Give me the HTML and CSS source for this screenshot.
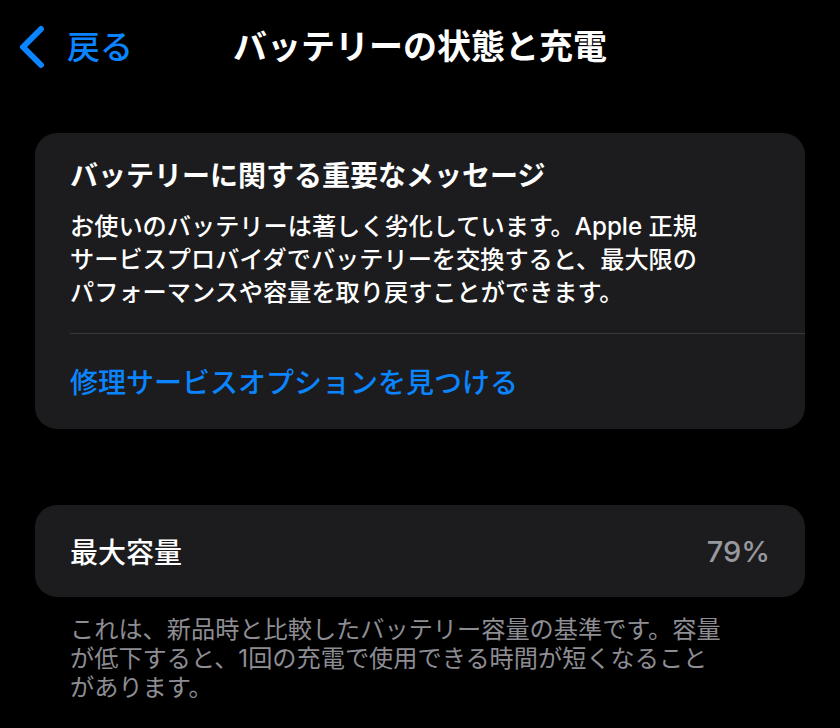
FILE: index.html
```html
<!DOCTYPE html>
<html lang="ja">
<head>
<meta charset="utf-8">
<title>バッテリーの状態と充電</title>
<link rel="stylesheet" href="styles.css">
</head>
<body>
<header class="nav">
  <a class="back" href="#">
    <svg class="chev" width="30" height="44" viewBox="0 0 30 44" aria-hidden="true">
      <polyline points="23,4 5,22 23,40" fill="none" stroke="#0a84ff" stroke-width="6" stroke-linecap="round" stroke-linejoin="round"/>
    </svg>
    <span class="back-label">戻る</span>
  </a>
  <h1 class="title">バッテリーの状態と充電</h1>
  <div class="spacer"></div>
</header>
<main class="content">
  <section class="card message">
    <h2 class="msg-title">バッテリーに関する重要なメッセージ</h2>
    <p class="msg-body">お使いのバッテリーは著しく劣化しています。Apple 正規<br>サービスプロバイダでバッテリーを交換すると、最大限の<br>パフォーマンスや容量を取り戻すことができます。</p>
    <div class="divider"></div>
    <a class="link" href="#">修理サービスオプションを見つける</a>
  </section>
  <section class="card row">
    <span class="row-label">最大容量</span>
    <span class="row-value">79%</span>
  </section>
  <p class="footnote">これは、新品時と比較したバッテリー容量の基準です。容量<br>が低下すると、1回の充電で使用できる時間が短くなること<br>があります。</p>
</main>
</body>
</html>
```
FILE: styles.css
```css
* { box-sizing: border-box; }
html, body {
  margin: 0;
  padding: 0;
  background: #000;
}
body {
  width: 840px;
  height: 728px;
  overflow: hidden;
  color: #fff;
  font-family: "Inter", "Noto Sans CJK JP", "Noto Sans", sans-serif;
  -webkit-font-smoothing: antialiased;
}
.nav {
  height: 94px;
  display: grid;
  grid-template-columns: 1fr auto 1fr;
  align-items: center;
}
.back {
  display: flex;
  align-items: center;
  gap: 19px;
  padding-left: 18px;
  text-decoration: none;
  color: #0a84ff;
}
.chev { display: block; }
.back-label {
  font-size: 33px;
  line-height: 40px;
  font-weight: 500;
}
.title {
  margin: 0;
  font-size: 34px;
  line-height: 40px;
  font-weight: 700;
  color: #fff;
}
.content {
  padding: 39px 35px 0;
}
.card {
  background: #1c1c1e;
  border-radius: 22px;
}
.message {
  padding: 26px 0 29px 35px;
  display: flex;
  flex-direction: column;
}
.msg-title {
  margin: 0;
  font-size: 28px;
  line-height: 34px;
  font-weight: 700;
}
.msg-body {
  margin: 17px 0 0;
  font-size: 24.2px;
  line-height: 33px;
  font-weight: 500;
}
.divider {
  margin-top: 24px;
  height: 1px;
  background: #38383a;
}
.link {
  margin-top: 32px;
  font-size: 28px;
  line-height: 34px;
  font-weight: 500;
  color: #0a84ff;
  text-decoration: none;
}
.row {
  margin-top: 76px;
  height: 92px;
  display: flex;
  align-items: center;
  justify-content: space-between;
  padding: 0 35px 0 35px;
}
.row-label {
  font-size: 28px;
  font-weight: 500;
}
.row-value {
  font-size: 29px;
  font-weight: 500;
  color: #98989f;
}
.footnote {
  margin: 18px 0 0;
  padding: 0 35px;
  font-size: 24.2px;
  line-height: 29px;
  color: #8d8d93;
}
```
